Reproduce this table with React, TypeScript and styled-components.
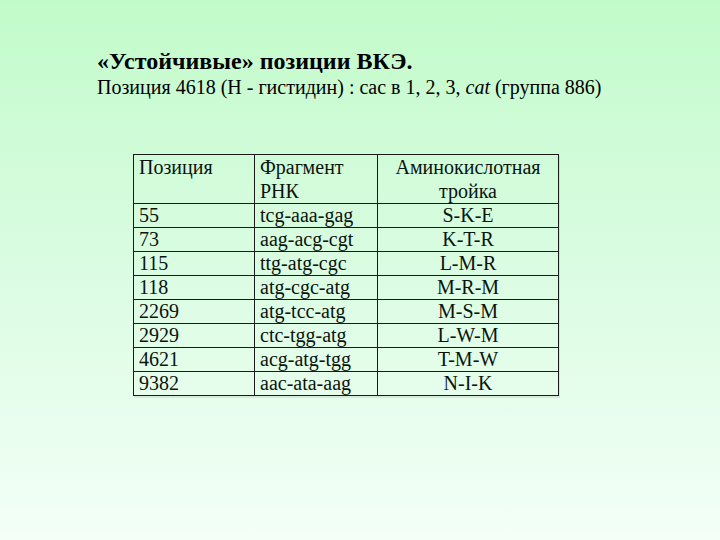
import React from 'react';
import styled, { createGlobalStyle } from 'styled-components';

const GlobalStyle = createGlobalStyle`
  html, body {
    margin: 0;
    padding: 0;
  }
  body {
    font-family: "Liberation Serif", "Times New Roman", serif;
    color: #000;
  }
`;

const Slide = styled.div`
  width: 720px;
  height: 540px;
  box-sizing: border-box;
  padding: 48px 0 0 97px;
  background: linear-gradient(180deg, #c2fbca 0%, #d8fce0 45%, #f3fff7 100%);
  overflow: hidden;
`;

const Title = styled.h1`
  margin: 0;
  font-size: 24px;
  font-weight: bold;
  line-height: 27px;
`;

const Subtitle = styled.p`
  margin: 0;
  font-size: 20px;
  line-height: 24px;
`;

const TableWrap = styled.div`
  margin: 55px 0 0 36px;
`;

const Grid = styled.table`
  border-collapse: collapse;
  font-size: 20px;
  color: #0a140c;
  box-shadow: 1px 2px 0 rgba(0, 0, 0, 0.08);
`;

const Cell = styled.td<{ $w: number; $center?: boolean; $head?: boolean }>`
  width: ${p => p.$w}px;
  box-sizing: border-box;
  border: 1px solid #1a1a1a;
  padding: 0 5px;
  height: ${p => (p.$head ? 48 : 23)}px;
  line-height: ${p => (p.$head ? 24 : 23)}px;
  vertical-align: top;
  white-space: nowrap;
  text-align: ${p => (p.$center ? 'center' : 'left')};
`;

const rows: [string, string, string][] = [
  ['55', 'tcg-aaa-gag', 'S-K-E'],
  ['73', 'aag-acg-cgt', 'K-T-R'],
  ['115', 'ttg-atg-cgc', 'L-M-R'],
  ['118', 'atg-cgc-atg', 'M-R-M'],
  ['2269', 'atg-tcc-atg', 'M-S-M'],
  ['2929', 'ctc-tgg-atg', 'L-W-M'],
  ['4621', 'acg-atg-tgg', 'T-M-W'],
  ['9382', 'aac-ata-aag', 'N-I-K'],
];

const App: React.FC = () => (
  <>
    <GlobalStyle />
    <Slide>
      <Title>«Устойчивые» позиции ВКЭ.</Title>
      <Subtitle>
        Позиция 4618 (Н - гистидин) : cac в 1, 2, 3, <i>cat</i> (группа 886)
      </Subtitle>
      <TableWrap>
        <Grid>
          <tbody>
            <tr>
              <Cell $w={121} $head>
                Позиция
              </Cell>
              <Cell $w={123} $head>
                Фрагмент
                <br />
                РНК
              </Cell>
              <Cell $w={181} $center $head>
                Аминокислотная
                <br />
                тройка
              </Cell>
            </tr>
            {rows.map(([pos, frag, tri]) => (
              <tr key={pos}>
                <Cell $w={121}>{pos}</Cell>
                <Cell $w={123}>{frag}</Cell>
                <Cell $w={181} $center>
                  {tri}
                </Cell>
              </tr>
            ))}
          </tbody>
        </Grid>
      </TableWrap>
    </Slide>
  </>
);

export default App;
